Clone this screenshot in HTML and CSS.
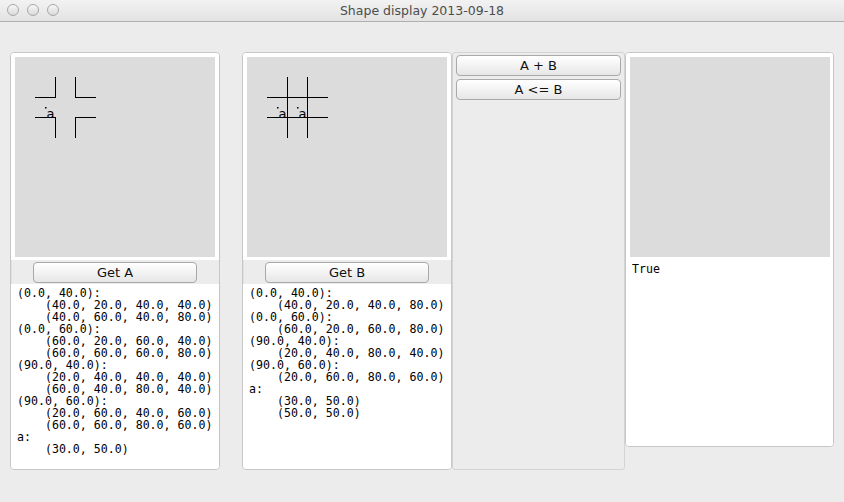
FILE: index.html
```html
<!DOCTYPE html>
<html>
<head>
<meta charset="utf-8">
<title>Shape display 2013-09-18</title>
<link rel="stylesheet" href="styles.css">
</head>
<body>
<div class="window">
  <div class="titlebar">
    <div class="lights"><span class="light"></span><span class="light"></span><span class="light"></span></div>
    <div class="title">Shape display 2013-09-18</div>
  </div>
  <div class="content">
    <div class="panel shape-panel panel-a">
      <div class="canvas-frame">
        <svg class="canvas" width="200" height="200" viewBox="0 0 200 200">
          <g class="lines">
            <line x1="40.5" y1="20" x2="40.5" y2="41"/>
            <line x1="40.5" y1="60" x2="40.5" y2="81"/>
            <line x1="60.5" y1="20" x2="60.5" y2="41"/>
            <line x1="60.5" y1="60" x2="60.5" y2="81"/>
            <line x1="20" y1="40.5" x2="41" y2="40.5"/>
            <line x1="60" y1="40.5" x2="81" y2="40.5"/>
            <line x1="20" y1="60.5" x2="41" y2="60.5"/>
            <line x1="60" y1="60.5" x2="81" y2="60.5"/>
          </g>
          <rect class="dot" x="30" y="50" width="1.5" height="1.5"/>
          <text class="label" x="31.5" y="61">a</text>
        </svg>
      </div>
      <div class="btn-row"><button class="btn">Get A</button></div>
      <pre class="output">(0.0, 40.0):
    (40.0, 20.0, 40.0, 40.0)
    (40.0, 60.0, 40.0, 80.0)
(0.0, 60.0):
    (60.0, 20.0, 60.0, 40.0)
    (60.0, 60.0, 60.0, 80.0)
(90.0, 40.0):
    (20.0, 40.0, 40.0, 40.0)
    (60.0, 40.0, 80.0, 40.0)
(90.0, 60.0):
    (20.0, 60.0, 40.0, 60.0)
    (60.0, 60.0, 80.0, 60.0)
a:
    (30.0, 50.0)</pre>
    </div>

    <div class="panel shape-panel panel-b">
      <div class="canvas-frame">
        <svg class="canvas" width="200" height="200" viewBox="0 0 200 200">
          <g class="lines">
            <line x1="40.5" y1="20" x2="40.5" y2="81"/>
            <line x1="60.5" y1="20" x2="60.5" y2="81"/>
            <line x1="20" y1="40.5" x2="81" y2="40.5"/>
            <line x1="20" y1="60.5" x2="81" y2="60.5"/>
          </g>
          <rect class="dot" x="30" y="50" width="1.5" height="1.5"/>
          <text class="label" x="31.5" y="61">a</text>
          <rect class="dot" x="50" y="50" width="1.5" height="1.5"/>
          <text class="label" x="51.5" y="61">a</text>
        </svg>
      </div>
      <div class="btn-row"><button class="btn">Get B</button></div>
      <pre class="output">(0.0, 40.0):
    (40.0, 20.0, 40.0, 80.0)
(0.0, 60.0):
    (60.0, 20.0, 60.0, 80.0)
(90.0, 40.0):
    (20.0, 40.0, 80.0, 40.0)
(90.0, 60.0):
    (20.0, 60.0, 80.0, 60.0)
a:
    (30.0, 50.0)
    (50.0, 50.0)</pre>
    </div>

    <div class="ops">
      <button class="btn op-btn">A + B</button>
      <button class="btn op-btn">A &lt;= B</button>
    </div>

    <div class="panel result-panel">
      <div class="canvas-frame">
        <svg class="canvas" width="200" height="200" viewBox="0 0 200 200"></svg>
      </div>
      <pre class="output result-output">True</pre>
    </div>
  </div>
</div>
</body>
</html>
```

FILE: styles.css
```css
* { box-sizing: border-box; }

html, body {
  margin: 0;
  padding: 0;
  background: #ececec;
}

body {
  width: 844px;
  height: 502px;
  overflow: hidden;
  font-family: "DejaVu Sans", "Liberation Sans", sans-serif;
}

.window {
  width: 844px;
  height: 502px;
  background: #ececec;
}

.titlebar {
  position: relative;
  height: 22px;
  background: linear-gradient(#f2f2f2, #e3e3e3);
  border-bottom: 1px solid #b0b0b0;
  display: flex;
  align-items: center;
  justify-content: center;
}

.lights {
  position: absolute;
  left: 7px;
  top: 4px;
  display: flex;
  gap: 8px;
}

.light {
  width: 12px;
  height: 12px;
  border-radius: 50%;
  border: 1px solid #a8a8a8;
  background: linear-gradient(#f7f7f7, #dadada);
}

.title {
  font-size: 12.5px;
  color: #4d4d4d;
  line-height: 22px;
  padding-top: 1px;
}

.content {
  display: flex;
  align-items: flex-start;
  padding: 30px 0 0 10px;
}

.panel {
  border: 1px solid #c6c6c6;
  border-radius: 4px;
  background: #ececec;
  display: flex;
  flex-direction: column;
  overflow: hidden;
  box-shadow: inset 1px 0 0 #e0e0e0;
}

.shape-panel {
  width: 210px;
  height: 418px;
}

.panel-a {
  margin-right: 22px;
}

.result-panel {
  width: 209px;
  height: 395px;
  background: #fff;
}

.canvas-frame {
  background: #fff;
  padding: 4px 4px 3px 4px;
  flex: none;
}

.result-panel .canvas-frame {
  padding: 4px 3px 3px 4px;
}

.canvas {
  display: block;
  background: #dcdcdc;
}

.lines line {
  stroke: #000;
  stroke-width: 1;
  shape-rendering: crispEdges;
}

.dot {
  fill: #000;
}

.label {
  font-family: "DejaVu Sans", sans-serif;
  font-size: 13px;
  fill: #000;
}

.btn-row {
  height: 24px;
  display: flex;
  justify-content: center;
  align-items: flex-start;
  padding-top: 2px;
  flex: none;
}

.btn {
  font-family: "DejaVu Sans", "Liberation Sans", sans-serif;
  font-size: 13px;
  color: #111;
  height: 21px;
  width: 164px;
  padding: 0;
  border: 1px solid #a9a9a9;
  border-radius: 4px;
  background: linear-gradient(#ffffff, #f3f3f3 50%, #e6e6e6);
  line-height: 19px;
}

.output {
  margin: 0;
  flex: 1;
  background: #fff;
  padding: 3px 6px;
  font-family: "DejaVu Sans Mono", "Liberation Mono", monospace;
  font-size: 11.6px;
  line-height: 12px;
  color: #000;
}

.result-output {
  padding-top: 3px;
}

.ops {
  width: 173px;
  height: 418px;
  border: 1px solid #d4d4d4;
  border-radius: 3px;
  background: #ececec;
  padding: 2px 3px 0 3px;
  display: flex;
  flex-direction: column;
  gap: 3px;
}

.op-btn {
  width: 165px;
  height: 21px;
}
```
